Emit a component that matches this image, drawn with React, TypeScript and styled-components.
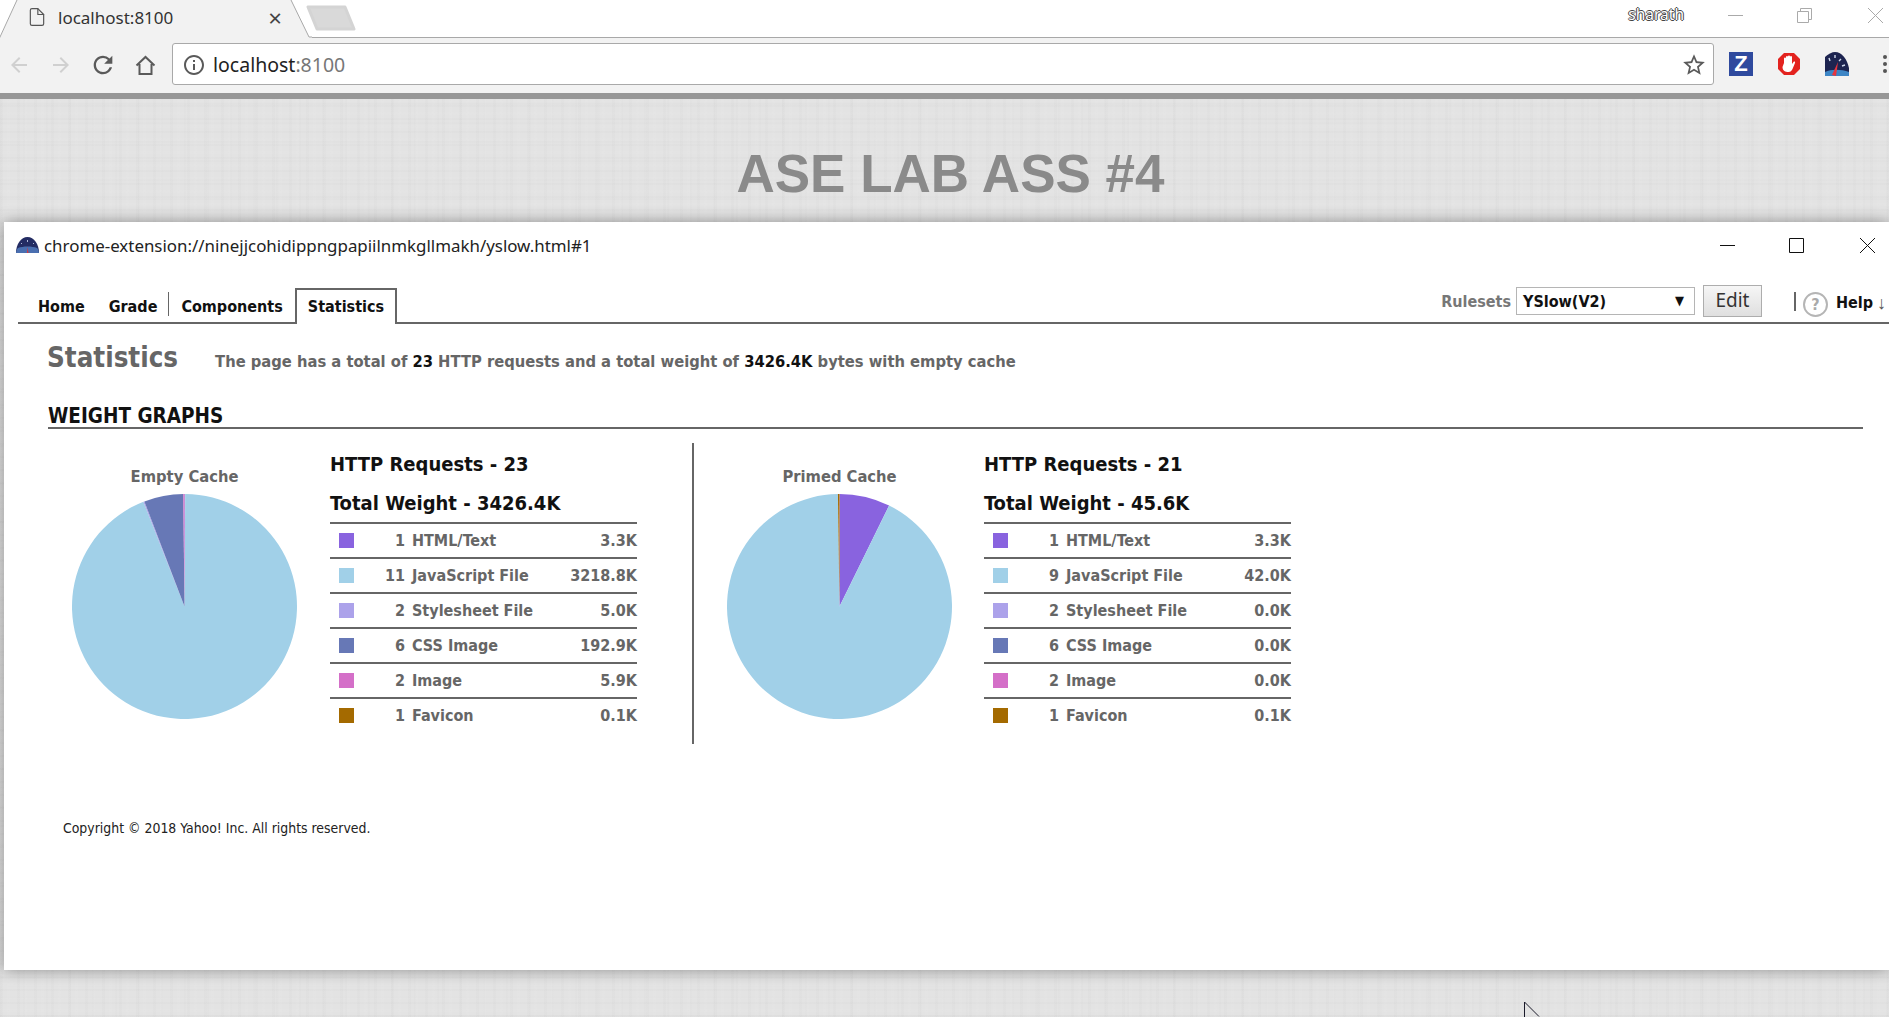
import React from "react";
import styled, { createGlobalStyle } from "styled-components";
import { FiFile } from "react-icons/fi";
import { MdArrowBack, MdArrowForward, MdRefresh, MdStarBorder, MdInfoOutline } from "react-icons/md";

const UI = `"Noto Sans", "Open Sans", sans-serif`;
const TAHOMA = `"DejaVu Sans Condensed", "DejaVu Sans", sans-serif`;

const GlobalStyle = createGlobalStyle`
  html, body { margin: 0; padding: 0; background: #e4e4e4; overflow: hidden; }
  * { box-sizing: border-box; }
`;

type Item = { count: number; label: string; weight: number; color: string };
type Graph = { title: string; requests: number; total: string; items: Item[] };

const graphs: Graph[] = [
  {
    title: "Empty Cache",
    requests: 23,
    total: "3426.4K",
    items: [
      { count: 1, label: "HTML/Text", weight: 3.3, color: "#8963df" },
      { count: 11, label: "JavaScript File", weight: 3218.8, color: "#a1d0e8" },
      { count: 2, label: "Stylesheet File", weight: 5.0, color: "#aca2ea" },
      { count: 6, label: "CSS Image", weight: 192.9, color: "#6778b6" },
      { count: 2, label: "Image", weight: 5.9, color: "#d46fc8" },
      { count: 1, label: "Favicon", weight: 0.1, color: "#a46a00" },
    ],
  },
  {
    title: "Primed Cache",
    requests: 21,
    total: "45.6K",
    items: [
      { count: 1, label: "HTML/Text", weight: 3.3, color: "#8963df" },
      { count: 9, label: "JavaScript File", weight: 42.0, color: "#a1d0e8" },
      { count: 2, label: "Stylesheet File", weight: 0.0, color: "#aca2ea" },
      { count: 6, label: "CSS Image", weight: 0.0, color: "#6778b6" },
      { count: 2, label: "Image", weight: 0.0, color: "#d46fc8" },
      { count: 1, label: "Favicon", weight: 0.1, color: "#a46a00" },
    ],
  },
];

const Pie = ({ items }: { items: Item[] }) => {
  const sum = items.reduce((a, i) => a + i.weight, 0);
  let angle = 0;
  const point = (a: number) => {
    const rad = (a / 180) * Math.PI;
    return `${112.5 + 112.5 * Math.sin(rad)} ${112.5 - 112.5 * Math.cos(rad)}`;
  };
  return (
    <svg width="225" height="225" viewBox="0 0 225 225">
      {items.map((i) => {
        const sweep = (i.weight / sum) * 360;
        if (sweep === 0) return null;
        const d = `M112.5 112.5 L${point(angle)} A112.5 112.5 0 ${sweep > 180 ? 1 : 0} 1 ${point(angle + sweep)} Z`;
        angle += sweep;
        return <path key={i.label} d={d} fill={i.color} />;
      })}
    </svg>
  );
};

// toolbar version of the gauge, quarter dome cut off on the right
const YSlowGauge = () => (
  <svg width="24" height="24" viewBox="0 0 24 24">
    <path d="M0 24V5C3 2 7 0 10 0c7 0 12 7 14 16v8z" fill="#1d2450" />
    <path d="M0 24v-4c6-3 16-3 24 0v4z" fill="#3d86c6" />
    <path d="M7 23l6-13-2 14z" fill="#e8343c" />
    <path d="M4 6l1 3M10 3l0 3M16 7l-2 2M20 13l-3 1" stroke="#cfd8ea" strokeWidth="1.4" />
  </svg>
);

// popup titlebar version, flat dome
const YSlowDome = () => (
  <svg width="23" height="16" viewBox="0 0 23 16">
    <path d="M0 16C0 7 5 0 11.500 0S23 7 23 16z" fill="#232c63" />
    <path d="M0 16c.5-3 1-4 2-5 5-2 14-2 19 0 1 1 1.500 2 2 5z" fill="#4a6fb0" />
    <path d="M11 16l.5-6 1 6z" fill="#d8343c" />
    <path d="M5 6l1 1M11.500 3v2M18 6l-1 1" stroke="#aeb8d8" />
  </svg>
);

const App = () => (
  <>
    <GlobalStyle />
    <TabStrip>
      <ActiveTab>
        <TabShape width="312" height="38" viewBox="0 0 312 38">
          <path d="M0 38 L17 0 H291 L309 37 H312 V38 Z" fill="#f2f2f2" />
          <path d="M0 37 L17 0 M291 0 L309 37 H312" stroke="#a8a8a8" fill="none" />
        </TabShape>
        <FiFile size={20} color="#555" strokeWidth={1.4} />
        <TabLabel>localhost:8100</TabLabel>
        <TabClose>×</TabClose>
      </ActiveTab>
      <NewTab width="50" height="26" viewBox="0 0 50 26">
        <path d="M2 2H39L48 24H11z" fill="#d9d9d9" stroke="#d4d4d4" strokeWidth="3" strokeLinejoin="round" />
      </NewTab>
      <UserName>sharath</UserName>
      <WindowButton $gap={0}>
        <svg width="15" height="15" viewBox="0 0 15 15"><path d="M0 7.500h15" stroke="#aaa" /></svg>
      </WindowButton>
      <WindowButton $gap={54}>
        <svg width="15" height="15" viewBox="0 0 15 15" fill="none" stroke="#aaa"><path d="M.5 3.500h11v11H.5zM3.500 3.500V.5h11v11h-3" /></svg>
      </WindowButton>
      <WindowButton $gap={56}>
        <svg width="15" height="15" viewBox="0 0 15 15"><path d="M0 0l15 15M15 0L0 15" stroke="#aaa" /></svg>
      </WindowButton>
    </TabStrip>

    <Toolbar>
      <NavButton><MdArrowBack size={24} color="#d0d0d0" /></NavButton>
      <NavButton><MdArrowForward size={24} color="#d0d0d0" /></NavButton>
      <NavButton><MdRefresh size={28} color="#5a5a5a" /></NavButton>
      <NavButton>
        <svg width="21" height="21" viewBox="0 0 21 21" fill="none" stroke="#5a5a5a" strokeWidth="2"><path d="M1.500 10.500l9-8.500 9 8.500M4.500 9v10h12V9" /></svg>
      </NavButton>
      <Omnibox>
        <MdInfoOutline size={24} color="#5a5a5a" />
        <UrlText>localhost<UrlPort>:8100</UrlPort></UrlText>
        <StarSlot><MdStarBorder size={26} color="#5a5a5a" /></StarSlot>
      </Omnibox>
      <Extensions>
        <ZBadge>Z</ZBadge>
        <svg width="24" height="24" viewBox="0 0 24 24">
          <path d="M7 1h10l6 6v10l-6 6H7l-6-6V7z" fill="#e3231f" />
          <path d="M7 11V6.500a1 1 0 0 1 2 0V5a1 1 0 0 1 2 0V4.500a1 1 0 0 1 2 0V5a1 1 0 0 1 2 0v7l1.500-2c1-1 2 0 1.500 1l-2.500 6c-1 2-2 3-4 3-3 0-6-1-6-5z" fill="#fff" />
        </svg>
        <YSlowGauge />
        <MenuDots><i /><i /><i /></MenuDots>
      </Extensions>
    </Toolbar>
    <ToolbarEdge />

    <Page>
      <PageTitle>ASE LAB ASS #4</PageTitle>
      <Popup>
        <PopupBar>
          <YSlowDome />
          <PopupUrl>chrome-extension://ninejjcohidippngpapiilnmkgllmakh/yslow.html#1</PopupUrl>
          <PopupControl $gap={0}>
            <svg width="15" height="15" viewBox="0 0 15 15"><path d="M0 7.500h15" stroke="#111" /></svg>
          </PopupControl>
          <PopupControl $gap={54}>
            <svg width="15" height="15" viewBox="0 0 15 15" fill="none"><path d="M.5.5h14v14H.5z" stroke="#111" /></svg>
          </PopupControl>
          <PopupControl $gap={56}>
            <svg width="15" height="15" viewBox="0 0 15 15"><path d="M0 0l15 15M15 0L0 15" stroke="#111" /></svg>
          </PopupControl>
        </PopupBar>

        <Nav>
          <NavTab $pad="0 12px 0 20px">Home</NavTab>
          <NavTab $pad="0 11px 0 12px" $divider>Grade</NavTab>
          <NavTab $pad="0 12px 0 12px">Components</NavTab>
          <CurrentTab>Statistics</CurrentTab>
          <NavRight>
            <RulesetLabel>Rulesets</RulesetLabel>
            <RulesetSelect>YSlow(V2)<SelectArrow>▼</SelectArrow></RulesetSelect>
            <EditButton>Edit</EditButton>
            <HelpDivider />
            <HelpCircle>?</HelpCircle>
            <HelpLink>Help</HelpLink>
            <HelpArrow>↓</HelpArrow>
          </NavRight>
        </Nav>

        <Summary>
          <SummaryTitle>Statistics</SummaryTitle>
          <SummaryText>
            The page has a total of <b>23</b> HTTP requests and a total weight of <b>3426.4K</b> bytes with empty cache
          </SummaryText>
        </Summary>

        <SectionTitle>WEIGHT GRAPHS</SectionTitle>

        <GraphRow>
          {graphs.map((g, n) => (
            <GraphBlock key={g.title} $first={n === 0}>
              <PieColumn>
                <PieTitle>{g.title}</PieTitle>
                <Pie items={g.items} />
              </PieColumn>
              <Legend $gap={n === 0 ? 9 : 8}>
                <LegendTitle>HTTP Requests - {g.requests}</LegendTitle>
                <LegendTitle>Total Weight - {g.total}</LegendTitle>
                {g.items.map((i) => (
                  <LegendRow key={i.label}>
                    <Swatch $color={i.color} />
                    <Count>{i.count}</Count>
                    <span>{i.label}</span>
                    <Weight>{i.weight.toFixed(1)}K</Weight>
                  </LegendRow>
                ))}
              </Legend>
            </GraphBlock>
          ))}
        </GraphRow>

        <Copyright>Copyright © 2018 Yahoo! Inc. All rights reserved.</Copyright>
      </Popup>
      <Cursor width="16" height="15" viewBox="0 0 16 15">
        <path d="M.5 0v15M.5 0L15 14.500" stroke="#1a1a2a" fill="#fff" />
      </Cursor>
    </Page>
  </>
);

export default App;

const TabStrip = styled.div`
  height: 38px;
  background: #fff;
  border-bottom: 1px solid #a8a8a8;
  display: flex;
  align-items: flex-start;
  position: relative;
`;

const ActiveTab = styled.div`
  position: relative;
  width: 306px;
  height: 38px;
  padding: 0 0 4px 27px;
  display: flex;
  align-items: center;
  & > *:not(svg:first-child) { position: relative; }
`;

const TabShape = styled.svg`
  position: absolute;
  left: 0;
  top: 0;
`;

const TabLabel = styled.span`
  font: 17px ${UI};
  color: #333;
  margin-left: 11px;
  flex: 1;
`;

const TabClose = styled.span`
  font: 24px ${UI};
  color: #444;
  margin-right: 24px;
`;

const NewTab = styled.svg`
  margin-top: 5px;
  position: relative;
`;

const UserName = styled.div`
  margin-left: auto;
  margin-right: 44px;
  margin-top: 3px;
  font: 15.5px ${UI};
  color: #fff;
  text-shadow: 1px 0 0 #444, -1px 0 0 #444, 0 1px 0 #444, 0 -1px 0 #444;
`;

const WindowButton = styled.div<{ $gap: number }>`
  width: 15px;
  height: 15px;
  margin: 8px 0 0 ${(p) => p.$gap}px;
  display: flex;
  &:last-child { margin-right: 6px; }
`;

const Toolbar = styled.div`
  height: 55px;
  background: #f2f2f2;
  display: flex;
  align-items: center;
  padding-left: 0;
`;

const NavButton = styled.div`
  width: 42px;
  display: flex;
  justify-content: center;
  margin: -1px 0 0 0;
  &:first-child { margin-left: -2px; }
`;

const Omnibox = styled.div`
  width: 1542px;
  height: 42px;
  margin-left: 6px;
  margin-top: -4px;
  padding: 2px 0 0 9px;
  background: #fff;
  border: 1px solid #a9a9a9;
  border-radius: 3px;
  display: flex;
  align-items: center;
`;

const UrlText = styled.span`
  margin-left: 7px;
  font: 19.5px ${UI};
  color: #222;
`;

const UrlPort = styled.span`
  color: #777;
`;

const StarSlot = styled.span`
  margin-left: auto;
  margin-right: 6px;
  display: flex;
`;

const Extensions = styled.div`
  display: flex;
  align-items: center;
  gap: 24px;
  margin-left: 15px;
  margin-top: -3px;
`;

const ZBadge = styled.div`
  width: 24px;
  height: 24px;
  background: #2f4a9e;
  color: #fff;
  font: bold 22px/24px "Liberation Sans", sans-serif;
  text-align: center;
`;

const MenuDots = styled.div`
  display: flex;
  flex-direction: column;
  gap: 3px;
  margin-left: 10px;
  i {
    width: 4px;
    height: 4px;
    border-radius: 50%;
    background: #555;
  }
`;

const ToolbarEdge = styled.div`
  height: 6px;
  background: #979797;
`;

const Page = styled.div`
  position: relative;
  height: 918px;
  padding: 0 0 0 4px;
  overflow: hidden;
  background-color: #e3e3e3;
  background-image:
    repeating-linear-gradient(90deg, rgba(0, 0, 0, 0.01) 0 3px, transparent 3px 7px, rgba(255, 255, 255, 0.03) 7px 10px, transparent 10px 17px),
    repeating-linear-gradient(90deg, rgba(0, 0, 0, 0.008) 0 2px, transparent 2px 23px),
    repeating-linear-gradient(0deg, rgba(0, 0, 0, 0.01) 0 2px, transparent 2px 5px, rgba(255, 255, 255, 0.03) 5px 8px, transparent 8px 13px),
    repeating-linear-gradient(0deg, rgba(0, 0, 0, 0.008) 0 2px, transparent 2px 19px);
`;

const PageTitle = styled.h1`
  margin: 0;
  height: 123px;
  padding: 45px 0 0 0;
  text-align: center;
  font: bold 53px/60px "Liberation Sans", sans-serif;
  color: #8a8a8a;
  position: relative;
  left: 4px;
`;

const Popup = styled.div`
  height: 748px;
  background: #fff;
  box-shadow: 0 0 14px rgba(0, 0, 0, 0.38);
  font-family: ${TAHOMA};
`;

const PopupBar = styled.div`
  height: 46px;
  display: flex;
  align-items: center;
  padding: 0 14px 0 12px;
`;

const PopupUrl = styled.span`
  margin-left: 5px;
  margin-right: auto;
  font: 16.9px ${UI};
  color: #222;
`;

const PopupControl = styled.div<{ $gap: number }>`
  width: 15px;
  height: 15px;
  margin-left: ${(p) => p.$gap}px;
  display: flex;
`;

const Nav = styled.div`
  height: 36px;
  margin: 20px 0 0 14px;
  border-bottom: 2px solid #666;
  display: flex;
  align-items: flex-end;
`;

const NavTab = styled.div<{ $pad: string; $divider?: boolean }>`
  height: 24px;
  margin-bottom: 6px;
  padding: ${(p) => p.$pad};
  font-size: 16px;
  line-height: 29px;
  font-weight: bold;
  color: #111;
  ${(p) => p.$divider && "border-right: 1px solid #666;"}
`;

const CurrentTab = styled.div`
  height: 36px;
  margin-bottom: -2px;
  padding: 0 11px;
  background: #fff;
  border: 2px solid #666;
  border-bottom: 0;
  font-size: 16px;
  line-height: 33px;
  font-weight: bold;
  color: #111;
`;

const NavRight = styled.div`
  margin-left: auto;
  height: 100%;
  padding-bottom: 8px;
  display: flex;
  align-items: center;
`;

const RulesetLabel = styled.span`
  font-size: 16px;
  font-weight: bold;
  color: #777;
  margin-right: 5px;
`;

const RulesetSelect = styled.div`
  width: 179px;
  height: 28px;
  padding: 0 6px;
  border: 1px solid #b5b5b5;
  font-size: 16px;
  line-height: 28px;
  font-weight: bold;
  color: #111;
  display: flex;
  justify-content: space-between;
`;

const SelectArrow = styled.span`
  font-size: 13px;
  line-height: 26px;
  margin-right: 4px;
`;

const EditButton = styled.div`
  width: 59px;
  height: 32px;
  margin-left: 8px;
  border: 1px solid #adadad;
  background: linear-gradient(#f6f6f6, #dfdfdf);
  font: 19px/29px ${UI};
  color: #333;
  text-align: center;
`;

const HelpDivider = styled.div`
  width: 2px;
  height: 19px;
  margin-left: 32px;
  background: #666;
`;

const HelpCircle = styled.div`
  width: 25px;
  height: 25px;
  margin-left: 7px;
  margin-top: 6px;
  border: 2px solid #b5b5b5;
  border-radius: 50%;
  font-size: 16px;
  line-height: 21px;
  font-weight: bold;
  text-align: center;
  color: #aaa;
`;

const HelpLink = styled.span`
  margin: 2px 0 0 8px;
  font-size: 16px;
  font-weight: bold;
  color: #111;
`;

const HelpArrow = styled.span`
  margin: 2px 3px 0 4px;
  font: 18px ${UI};
  color: #555;
`;

const Summary = styled.div`
  margin: 16px 0 0 43px;
  display: flex;
  align-items: baseline;
  gap: 37px;
`;

const SummaryTitle = styled.span`
  font-size: 27.500px;
  line-height: 34px;
  font-weight: bold;
  color: #666;
`;

const SummaryText = styled.span`
  font-size: 16.4px;
  font-weight: bold;
  color: #666;
  b { color: #111; }
`;

const SectionTitle = styled.div`
  margin: 26px 26px 0 44px;
  height: 29px;
  border-bottom: 2px solid #666;
  font-size: 20.500px;
  line-height: 33px;
  font-weight: bold;
  color: #111;
`;

const GraphRow = styled.div`
  display: flex;
  margin: 14px 0 0 44px;
  min-height: 301px;
`;

const GraphBlock = styled.div<{ $first: boolean }>`
  display: flex;
  ${(p) => (p.$first ? "width: 646px; border-right: 2px solid #666;" : "padding-left: 9px;")}
`;

const PieColumn = styled.div`
  width: 273px;
  padding-top: 23px;
  display: flex;
  flex-direction: column;
  align-items: center;
  svg { margin-top: 6px; }
`;

const PieTitle = styled.div`
  height: 22px;
  font-size: 16.4px;
  line-height: 22px;
  font-weight: bold;
  color: #666;
`;

const Legend = styled.div<{ $gap: number }>`
  width: 307px;
  margin-left: ${(p) => p.$gap}px;
  padding-top: 1px;
`;

const LegendTitle = styled.div`
  height: 39px;
  font-size: 20px;
  line-height: 41px;
  font-weight: bold;
  color: #111;
`;

const LegendRow = styled.div`
  height: 35px;
  padding: 0 0 0 9px;
  border-top: 2px solid #666;
  display: grid;
  grid-template-columns: 15px 58px 1fr auto;
  align-items: center;
  font-size: 16px;
  font-weight: bold;
  color: #666;
`;

const Swatch = styled.span<{ $color: string }>`
  width: 15px;
  height: 15px;
  background: ${(p) => p.$color};
`;

const Count = styled.span`
  text-align: right;
  margin-right: 7px;
`;

const Weight = styled.span`
  text-align: right;
`;

const Copyright = styled.div`
  margin: 75px 0 0 59px;
  font-size: 13.900px;
  line-height: 18px;
  color: #222;
`;

const Cursor = styled.svg`
  position: absolute;
  left: 1524px;
  top: 903px;
`;
